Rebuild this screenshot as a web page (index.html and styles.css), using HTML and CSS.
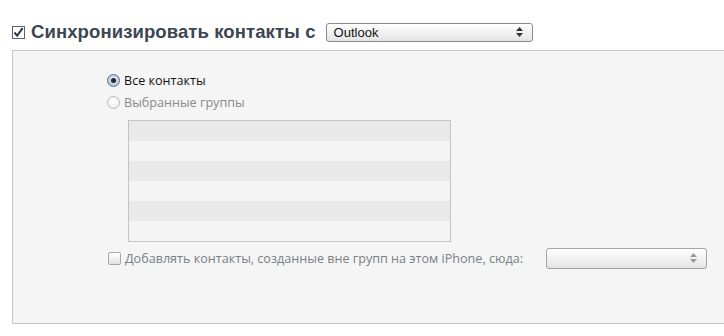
FILE: index.html
```html
<!DOCTYPE html>
<html>
<head>
<meta charset="utf-8">
<link rel="stylesheet" href="styles.css">
</head>
<body>
<div class="page">
  <div class="header">
    <span class="title-check">
      <svg width="13" height="13" viewBox="0 0 13 13"><rect x="0.5" y="0.5" width="12" height="12" fill="#fff" stroke="#5a6470"/><path d="M2.5 6.5 L5.2 9.6 L10.6 2.2" fill="none" stroke="#2e3842" stroke-width="2"/></svg>
    </span>
    <span class="title">Синхронизировать контакты с</span>
    <div class="select main-select">
      <span class="select-text">Outlook</span>
      <svg class="arrows" width="7" height="10" viewBox="0 0 7 10"><path d="M3.5 0 L7 4 H0 Z M3.5 10 L7 6 H0 Z" fill="#333"/></svg>
    </div>
  </div>
  <div class="panel">
    <div class="options">
      <label class="option">
        <span class="radio checked"><span class="dot"></span></span>
        <span class="label-text">Все контакты</span>
      </label>
      <label class="option disabled">
        <span class="radio"></span>
        <span class="label-text">Выбранные группы</span>
      </label>
      <div class="list">
        <div class="row alt"></div>
        <div class="row"></div>
        <div class="row alt"></div>
        <div class="row"></div>
        <div class="row alt"></div>
        <div class="row"></div>
      </div>
      <div class="add-row">
        <span class="check-box"></span>
        <span class="label-text muted">Добавлять контакты, созданные вне групп на этом iPhone, сюда:</span>
        <div class="select small-select">
          <span class="select-text"></span>
          <svg class="arrows" width="7" height="10" viewBox="0 0 7 10"><path d="M3.5 0 L7 4 H0 Z M3.5 10 L7 6 H0 Z" fill="#999"/></svg>
        </div>
      </div>
    </div>
  </div>
</div>
</body>
</html>
```
FILE: styles.css
```css
html, body {
  margin: 0;
  padding: 0;
  background: #ffffff;
  overflow: hidden;
}
.page {
  width: 724px;
  height: 336px;
  font-family: "Open Sans", "Noto Sans", sans-serif;
}
.header {
  display: flex;
  align-items: center;
  padding: 22px 0 0 12px;
  height: 20px;
}
.title-check {
  display: flex;
  width: 13px;
  height: 13px;
  margin-right: 6px;
}
.title {
  font-family: "Liberation Sans", Arial, sans-serif;
  font-weight: bold;
  font-size: 18.5px;
  color: #3c4650;
  letter-spacing: 0.1px;
}
.select {
  display: flex;
  align-items: center;
  justify-content: space-between;
  box-sizing: border-box;
  border: 1px solid #8a8a8a;
  border-radius: 3px;
  background: linear-gradient(#ffffff, #e4e4e4);
  padding: 0 9px 0 7px;
}
.main-select {
  margin-left: 10px;
  width: 207px;
  height: 19px;
}
.main-select .select-text {
  font-family: "Liberation Sans", Arial, sans-serif;
  font-size: 13px;
  color: #111;
}
.panel {
  margin: 8px 0 0 12px;
  width: 724px;
  height: 274px;
  box-sizing: border-box;
  border: 1px solid #c8c8c8;
  border-right: none;
  background: #f5f5f5;
}
.options {
  display: flex;
  flex-direction: column;
  padding: 18px 0 0 94px;
}
.option {
  display: flex;
  align-items: center;
  height: 22px;
  font-size: 12.6px;
  color: #111;
}
.option.disabled {
  color: #8a8a8a;
}
.radio {
  box-sizing: border-box;
  width: 13px;
  height: 13px;
  border-radius: 50%;
  border: 1px solid #8e8f8f;
  background: radial-gradient(circle at 50% 40%, #ffffff, #dcdcdc);
  margin-right: 4px;
  display: flex;
  align-items: center;
  justify-content: center;
}
.radio.checked {
  border-color: #5a6b80;
  background: radial-gradient(circle at 50% 40%, #e4ecf4, #a8b8ca);
}
.option.disabled .radio {
  border-color: #b8b8b8;
  background: radial-gradient(circle at 50% 40%, #ffffff, #e8e8e8);
}
.dot {
  width: 5px;
  height: 5px;
  border-radius: 50%;
  background: #1e2a38;
}
.list {
  margin: 7px 0 0 21px;
  width: 323px;
  height: 122px;
  box-sizing: border-box;
  border: 1px solid #c3c3c3;
  background: #f4f4f4;
}
.row {
  height: 20px;
  background: #f4f4f4;
}
.row.alt {
  background: #e9e9e9;
}
.add-row {
  display: flex;
  align-items: center;
  margin-top: 5px;
  height: 22px;
  font-size: 12.6px;
}
.check-box {
  box-sizing: border-box;
  width: 13px;
  height: 13px;
  border: 1px solid #a8a8a8;
  border-radius: 2px;
  background: linear-gradient(#ffffff, #e2e2e2);
  margin: 0 4px 0 1px;
}
.muted {
  color: #7a7f86;
}
.small-select {
  margin-left: 23px;
  width: 161px;
  height: 21px;
  border-color: #a4a4a4;
}
```
